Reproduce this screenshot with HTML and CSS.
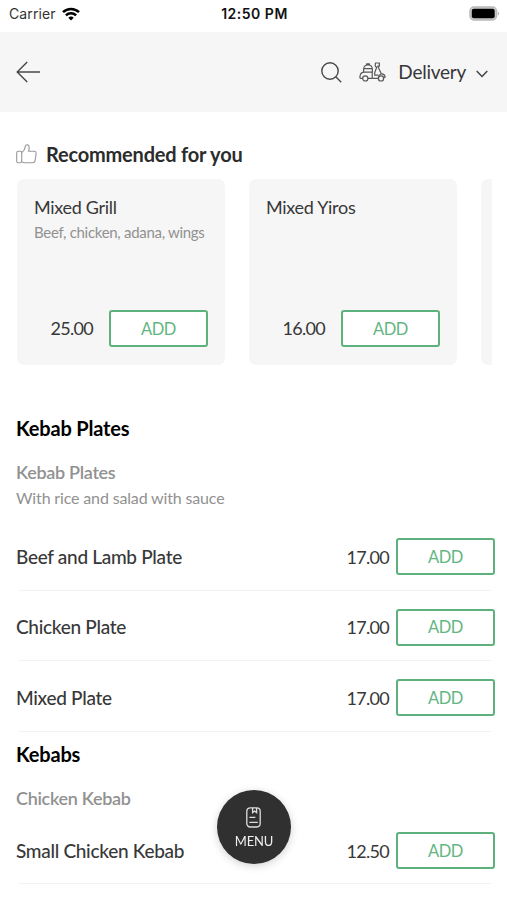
FILE: index.html
```html
<!DOCTYPE html>
<html lang="en">
<head>
    <meta charset="UTF-8">
    <meta name="viewport" content="width=device-width, initial-scale=1.0">
    <title>Order Menu</title>
    <link rel="stylesheet" href="styles.css">
</head>
<body>
    <div class="status-bar">
        <div class="carrier">
            <span>Carrier</span>
            <svg width="18" height="14" viewBox="0 0 18 14" fill="none" stroke="#000" stroke-width="2.5">
                <path d="M1 5.2a11.3 11.3 0 0 1 16 0"/>
                <path d="M3.9 8.3a7.2 7.2 0 0 1 10.2 0"/>
                <path d="M9 13.6L6.3 10.8a3.8 3.8 0 0 1 5.4 0z" fill="#000" stroke="none"/>
            </svg>
        </div>
        <span class="time">12:50 PM</span>
        <svg class="battery" width="31" height="15" viewBox="0 0 31 15">
            <rect x="1" y="1" width="26.5" height="13" rx="4" fill="#ccc" stroke="#b8b8b8" stroke-width="1.4"/>
            <rect x="2.8" y="2.8" width="22.9" height="9.4" rx="2" fill="#000"/>
            <path d="M28.8 5.2q2.6 2.3 0 4.6z" fill="#b0b0b0"/>
        </svg>
    </div>
    <header>
        <svg class="back" width="24" height="22" viewBox="0 0 24 22" fill="none" stroke="#484848" stroke-width="1.4">
            <path d="M24 11H1.2M11.2 1L1.2 11l10 10"/>
        </svg>
        <div class="header-right">
            <svg class="search" width="21" height="21" viewBox="0 0 21 21" fill="none" stroke="#484848" stroke-width="1.4">
                <circle cx="9" cy="9" r="8.2"/>
                <path d="M14.8 14.8l5.4 5.4"/>
            </svg>
            <svg class="scooter" width="27" height="20" viewBox="0 0 27 20" fill="none" stroke="#585858" stroke-width="1.2" stroke-linejoin="round">
                <path d="M3.6 16.4H1.6Q.8 16.4.9 15q.3-4.4 3.7-4.8h8.6v6.2H9"/>
                <path d="M4.6 10.2V7.6q0-4.6 4.4-4.6t4.4 4.6v2.6M4.7 6.7h8.6M7.6 3V1.8h2.8V3"/>
                <circle cx="6.3" cy="16.4" r="2.6"/>
                <path d="M13.2 16.4h6.2q-.2-3.6 2.8-4.4 3.4-.3 4 3l-1.4.8"/>
                <path d="M16 1h4.4v3.2h-1.6l3.6 7.8M16.3 1.2v3l1.4 1-2 5.6v2.4h3.6"/>
                <circle cx="22" cy="16.4" r="2.6"/>
            </svg>
            <span class="order-type">Delivery</span>
            <svg class="chevron" width="12" height="8" viewBox="0 0 12 8" fill="none" stroke="#404040" stroke-width="1.4">
                <path d="M.7 1L6 6.4 11.3 1"/>
            </svg>
        </div>
    </header>

    <div class="recommended">
        <svg width="21" height="20" viewBox="0 0 21 20" fill="none" stroke="#999" stroke-width="1.1" stroke-linejoin="round">
            <rect x=".7" y="7.2" width="5" height="11.6" rx="1.6"/>
            <path d="M5.7 8.5q3.3-2.2 3.6-6.2Q9.5.7 11 .7q2.3.2 2.2 3.2 0 1.7-.7 3.3h5.6q2.2.2 2 2.4l-1 7q-.4 2.1-2.4 2.2H9q-2 0-3.3-1.2"/>
        </svg>
        <h2>Recommended for you</h2>
    </div>
    <div class="cards">
        <div class="card">
            <h3>Mixed Grill</h3>
            <p>Beef, chicken, adana, wings</p>
            <div class="card-bottom">
                <span class="price">25.00</span>
                <button class="add-btn">ADD</button>
            </div>
        </div>
        <div class="card">
            <h3>Mixed Yiros</h3>
            <div class="card-bottom">
                <span class="price">16.00</span>
                <button class="add-btn">ADD</button>
            </div>
        </div>
        <div class="card"></div>
    </div>

    <div class="section">
        <h2>Kebab Plates</h2>
        <h3>Kebab Plates</h3>
        <p>With rice and salad with sauce</p>
        <div class="item">
            <span class="name">Beef and Lamb Plate</span>
            <span class="price">17.00</span>
            <button class="add-btn">ADD</button>
        </div>
        <div class="item">
            <span class="name">Chicken Plate</span>
            <span class="price">17.00</span>
            <button class="add-btn">ADD</button>
        </div>
        <div class="item">
            <span class="name">Mixed Plate</span>
            <span class="price">17.00</span>
            <button class="add-btn">ADD</button>
        </div>
    </div>
    <div class="section">
        <h2>Kebabs</h2>
        <h3>Chicken Kebab</h3>
        <div class="item">
            <span class="name">Small Chicken Kebab</span>
            <span class="price">12.50</span>
            <button class="add-btn">ADD</button>
        </div>
    </div>

    <!-- Floating menu button -->
    <button class="menu-btn">
        <svg width="15" height="21" viewBox="0 0 15 21" fill="none" stroke="#ddd" stroke-width="1.3">
            <rect x=".8" y=".8" width="13.4" height="19.2" rx="3.4"/>
            <path d="M6.6 1v4.6l2-1.5 2 1.5V1M3.4 10.4h6M3.4 15.4h8.4"/>
        </svg>
        <span>MENU</span>
    </button>
</body>
</html>
```
FILE: styles.css
```css
* {
    box-sizing: border-box;
}
body {
    margin: 0;
    height: 900px;
    overflow: hidden;
    font-family: Lato, sans-serif;
    color: #383838;
    background-color: #fff;
}
h2, h3, p {
    margin: 0;
}
svg {
    display: block;
    flex-shrink: 0;
}
.status-bar {
    display: grid;
    grid-template-columns: 1fr auto 1fr;
    align-items: center;
    height: 32px;
    padding: 0 7px 5px 9px;
    font-family: Inter, sans-serif;
    font-size: 14px;
}
.carrier {
    display: flex;
    align-items: center;
    gap: 6px;
    color: #333;
    letter-spacing: 0.1px;
}
.time {
    font-weight: 600;
    letter-spacing: 0.5px;
    color: #111;
}
.battery {
    justify-self: end;
}
header {
    display: flex;
    align-items: center;
    justify-content: space-between;
    height: 80px;
    padding: 0 19px 0 16px;
    background-color: #f6f6f6;
}
.header-right {
    display: flex;
    align-items: center;
}
.search {
    margin-right: -1px;
}
.scooter {
    margin-left: 18px;
}
.order-type {
    margin-left: 12px;
    font-size: 19px;
    line-height: 24px;
    letter-spacing: -0.25px;
}
.chevron {
    margin: 3px 0 0 10px;
}
.recommended {
    display: flex;
    align-items: center;
    gap: 9px;
    height: 26px;
    margin: 29px 0 12px 16px;
}
.recommended h2 {
    font-size: 20px;
    line-height: 24px;
    letter-spacing: -0.2px;
    color: #2c2c2c;
}
.cards {
    display: flex;
    gap: 24px;
    margin: 0 15px 0 17px;
    overflow: hidden;
}
.card {
    display: flex;
    flex-direction: column;
    flex: 0 0 208px;
    min-width: 0;
    height: 186px;
    padding: 16px 17px 18px;
    border-radius: 7px;
    background-color: #f6f6f6;
}
.card h3 {
    font-size: 18px;
    font-weight: 400;
    line-height: 24px;
    letter-spacing: -0.3px;
}
.card p {
    margin-top: 2px;
    font-size: 15px;
    line-height: 22px;
    letter-spacing: -0.3px;
    white-space: nowrap;
    color: #919191;
}
.card-bottom {
    display: flex;
    align-items: center;
    justify-content: flex-end;
    gap: 16px;
    margin-top: auto;
}
.price {
    font-size: 18px;
    line-height: 24px;
    letter-spacing: -0.7px;
}
.card .price {
    padding-bottom: 1px;
}
.add-btn {
    width: 99px;
    height: 37px;
    padding: 0;
    border: 2px solid #5cb17c;
    border-radius: 3px;
    background-color: #fff;
    color: #63b582;
    font-family: inherit;
    font-size: 16.5px;
    letter-spacing: -0.5px;
}
.section {
    padding: 0 12px 0 16px;
}
.section h2 {
    padding-top: 9px;
    font-size: 20px;
    line-height: 26px;
    letter-spacing: -0.18px;
    color: #000;
}
.cards + .section {
    padding-top: 41px;
}
.section h3 {
    margin-top: 19px;
    margin-bottom: 4px;
    font-size: 18px;
    font-weight: 600;
    line-height: 24px;
    letter-spacing: -0.3px;
    color: #919191;
}
.section p {
    margin-top: -1px;
    margin-bottom: 11px;
    font-size: 16px;
    line-height: 22px;
    letter-spacing: -0.15px;
    color: #919191;
}
.item {
    display: flex;
    align-items: center;
    height: 70.6px;
    padding-top: 3px;
    background: linear-gradient(#f3f3f3, #f3f3f3) 3px 100% / calc(100% - 7px) 1px no-repeat;
}
.item .name {
    flex: 1;
    font-size: 19px;
    font-weight: 500;
    line-height: 24px;
    letter-spacing: -0.3px;
}
.item .price {
    margin-right: 7px;
}
.menu-btn {
    position: fixed;
    left: 217px;
    top: 790px;
    display: flex;
    flex-direction: column;
    align-items: center;
    width: 74px;
    height: 74px;
    padding: 17px 0 0;
    border: none;
    border-radius: 50%;
    background-color: #303030;
    color: #eee;
    font-family: inherit;
    font-size: 13px;
    line-height: 18px;
    letter-spacing: -0.2px;
    box-shadow: 0 2px 9px rgba(0, 0, 0, 0.18);
}
.menu-btn svg {
    margin-right: 1px;
}
.menu-btn span {
    margin-top: 4px;
}
```
